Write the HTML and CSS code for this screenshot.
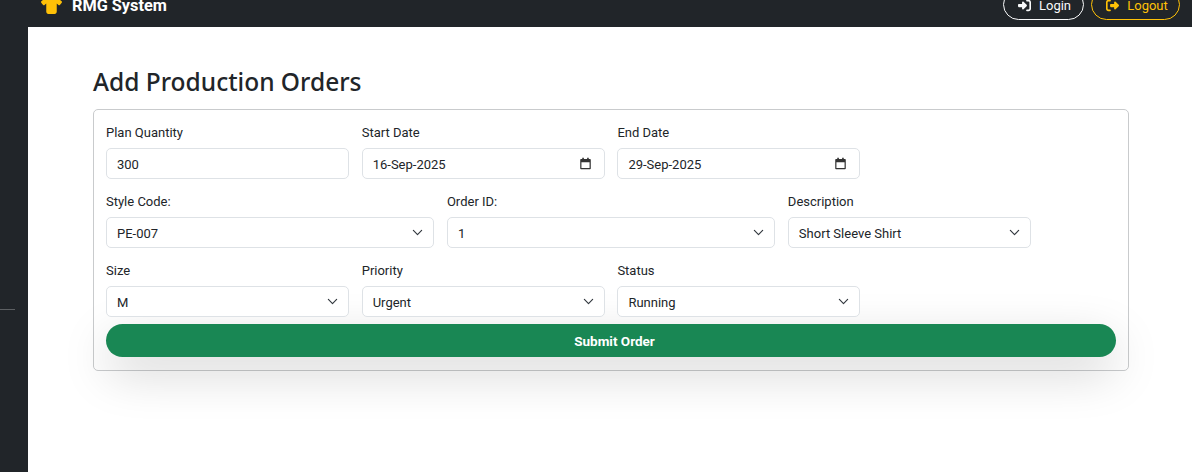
FILE: index.html
```html
<!DOCTYPE html>
<html>

<head>
    <title>Add Production Orders</title>
    <meta name="viewport" content="width=device-width, initial-scale=1">
    <link rel="stylesheet" href="styles.css">
</head>

<body>
    <header class="topbar">
        <a class="brand" href="#">
            <svg class="brand-icon" viewBox="0 0 640 512"><path d="M211.8 0c7.8 0 14.3 5.7 16.7 13.2C240.8 51.9 277.1 80 320 80s79.2-28.1 91.5-66.8C413.9 5.7 420.4 0 428.2 0l12.6 0c22.5 0 44.2 7.9 61.5 22.3L628.5 127.4c6.6 5.5 10.7 13.5 11.4 22.1s-2.1 17.1-7.8 23.6l-56 64c-11.4 13.1-31.2 14.6-44.6 3.5L480 197.7 480 448c0 35.3-28.7 64-64 64l-192 0c-35.3 0-64-28.7-64-64l0-250.3-51.5 42.9c-13.3 11.1-33.1 9.6-44.6-3.5l-56-64c-5.7-6.5-8.5-15-7.8-23.6s4.8-16.6 11.4-22.1L137.7 22.3C155 7.9 176.7 0 199.2 0l12.6 0z"/></svg>
            <span>RMG System</span>
        </a>
        <nav class="top-actions">
            <a class="pill pill-login" href="#">
                <svg class="pill-icon" viewBox="0 0 512 512"><path d="M217.9 105.9L340.7 228.7c7.2 7.2 11.3 17.1 11.3 27.3s-4.1 20.1-11.3 27.3L217.9 406.1c-6.4 6.4-15 9.9-24 9.9c-18.7 0-33.9-15.2-33.9-33.9l0-62.1L32 320c-17.7 0-32-14.3-32-32l0-64c0-17.7 14.3-32 32-32l128 0 0-62.1c0-18.7 15.2-33.9 33.9-33.9c9 0 17.6 3.6 24 9.9zM352 416l64 0c17.7 0 32-14.3 32-32l0-256c0-17.7-14.3-32-32-32l-64 0c-17.7 0-32-14.3-32-32s14.3-32 32-32l64 0c53 0 96 43 96 96l0 256c0 53-43 96-96 96l-64 0c-17.7 0-32-14.3-32-32s14.3-32 32-32z"/></svg>
                Login
            </a>
            <a class="pill pill-logout" href="#">
                <svg class="pill-icon" viewBox="0 0 512 512"><path d="M377.9 105.9L500.7 228.7c7.2 7.2 11.3 17.1 11.3 27.3s-4.1 20.1-11.3 27.3L377.9 406.1c-6.4 6.4-15 9.9-24 9.9c-18.7 0-33.9-15.2-33.9-33.9l0-62.1-128 0c-17.7 0-32-14.3-32-32l0-64c0-17.7 14.3-32 32-32l128 0 0-62.1c0-18.7 15.2-33.9 33.9-33.9c9 0 17.6 3.6 24 9.9zM160 96L96 96c-17.7 0-32 14.3-32 32l0 256c0 17.7 14.3 32 32 32l64 0c17.7 0 32 14.3 32 32s-14.3 32-32 32l-64 0c-53 0-96-43-96-96L0 128C0 75 43 32 96 32l64 0c17.7 0 32 14.3 32 32s-14.3 32-32 32z"/></svg>
                Logout
            </a>
        </nav>
    </header>

    <div class="layout">
        <aside class="sidebar">
            <hr class="sidebar-line">
        </aside>

        <main class="content">
            <h2 class="page-title">Add Production Orders</h2>
            <form class="order-form">
                <div class="form-row">
                    <div class="field span-3">
                        <label for="planQty">Plan Quantity</label>
                        <input class="control" type="text" id="planQty" value="300">
                    </div>
                    <div class="field span-3">
                        <label for="startDate">Start Date</label>
                        <input class="control control-date" type="text" id="startDate" value="16-Sep-2025">
                    </div>
                    <div class="field span-3">
                        <label for="endDate">End Date</label>
                        <input class="control control-date" type="text" id="endDate" value="29-Sep-2025">
                    </div>
                </div>

                <div class="form-row">
                    <div class="field span-4">
                        <label for="styleCode">Style Code:</label>
                        <select class="control control-select" id="styleCode">
                            <option>PE-007</option>
                        </select>
                    </div>
                    <div class="field span-4">
                        <label for="orderId">Order ID:</label>
                        <select class="control control-select" id="orderId">
                            <option>1</option>
                        </select>
                    </div>
                    <div class="field span-3">
                        <label for="description">Description</label>
                        <select class="control control-select" id="description">
                            <option>Short Sleeve Shirt</option>
                        </select>
                    </div>
                </div>

                <div class="form-row">
                    <div class="field span-3">
                        <label for="size">Size</label>
                        <select class="control control-select" id="size">
                            <option>M</option>
                        </select>
                    </div>
                    <div class="field span-3">
                        <label for="priority">Priority</label>
                        <select class="control control-select" id="priority">
                            <option>Urgent</option>
                        </select>
                    </div>
                    <div class="field span-3">
                        <label for="status">Status</label>
                        <select class="control control-select" id="status">
                            <option>Running</option>
                        </select>
                    </div>
                </div>

                <button class="submit-btn" type="submit">Submit Order</button>
            </form>
        </main>
    </div>
</body>

</html>
```

FILE: styles.css
```css
* {
    box-sizing: border-box;
}

html,
body {
    height: 472px;
    overflow: hidden;
}

body {
    margin: 0;
    background: #212529;
    color: #212529;
    font-family: Roboto, "Noto Sans", Arial, sans-serif;
    font-size: 13px;
}

.topbar {
    height: 27px;
    display: flex;
    justify-content: space-between;
    align-items: flex-end;
    padding: 0 12px 7px 41px;
    overflow: hidden;
}

.brand {
    display: flex;
    align-items: center;
    gap: 10px;
    color: #fff;
    font-size: 16.3px;
    font-weight: 700;
    text-decoration: none;
    line-height: 20px;
    margin-bottom: 4px;
}

.brand-icon {
    width: 21px;
    height: 17px;
    margin-top: -2px;
    fill: #ffc107;
}

.top-actions {
    display: flex;
    gap: 7px;
}

.pill {
    display: flex;
    align-items: center;
    justify-content: center;
    gap: 8px;
    height: 31px;
    padding: 1px 0 0 2px;
    border: 1px solid;
    border-radius: 50rem;
    font-size: 13px;
    text-decoration: none;
}

.pill-login {
    width: 81px;
    color: #f8f9fa;
    border-color: #f8f9fa;
}

.pill-logout {
    width: 89px;
    padding-left: 3px;
    color: #ffc107;
    border-color: #ffc107;
}

.pill-icon {
    width: 13px;
    height: 13px;
    fill: currentColor;
}

.layout {
    display: flex;
    height: 445px;
}

.sidebar {
    width: 28px;
    padding-top: 282px;
}

.sidebar-line {
    width: 15px;
    height: 1px;
    margin: 0;
    border: 0;
    background: #5d6063;
}

.content {
    flex: 1;
    background: #fff;
    padding: 39px 63px 0 65px;
}

.page-title {
    margin: 0 0 12px;
    font-family: "Noto Sans", Arial, sans-serif;
    font-size: 24.5px;
    font-weight: 500;
    line-height: 31px;
}

.order-form {
    border: 1px solid #c9cbcd;
    border-radius: 5px;
    padding: 12px 12px 13px;
}

.form-row {
    display: grid;
    grid-template-columns: repeat(12, 1fr);
    column-gap: 12.8px;
    margin-bottom: 12px;
}

.form-row:nth-last-child(2) {
    margin-bottom: 7px;
}

.span-3 {
    grid-column: span 3;
}

.span-4 {
    grid-column: span 4;
}

.field label {
    display: block;
    height: 19px;
    margin-bottom: 7px;
    padding-top: 2px;
    line-height: 18px;
}

.control {
    display: block;
    width: 100%;
    height: 31px;
    padding: 1px 10px 0;
    border: 1px solid #dee2e6;
    border-radius: 5px;
    background-color: #fff;
    background-repeat: no-repeat;
    color: #212529;
    font-family: inherit;
    font-size: 13px;
    appearance: none;
}

.control-select {
    padding-right: 32px;
    background-image: url("data:image/svg+xml,%3csvg xmlns='http://www.w3.org/2000/svg' viewBox='0 0 16 16'%3e%3cpath fill='none' stroke='%23343a40' stroke-linecap='round' stroke-linejoin='round' stroke-width='1.7' d='m2 5 6 6 6-6'/%3e%3c/svg%3e");
    background-position: right 10px center;
    background-size: 11px 11px;
}

.control-date {
    background-image: url("data:image/svg+xml,%3csvg xmlns='http://www.w3.org/2000/svg' viewBox='0 0 16 16'%3e%3cpath fill='%23333' d='M4 1h2v1.500h4V1h2v1.500h1.500a1 1 0 0 1 1 1V14a1 1 0 0 1-1 1h-11a1 1 0 0 1-1-1V3.500a1 1 0 0 1 1-1H4zM3 6.500V13.500h10V6.500z'/%3e%3c/svg%3e");
    background-position: right 12px center;
    background-size: 13px 13px;
}

.submit-btn {
    display: block;
    width: 100%;
    height: 33px;
    padding: 1px 0 0 7px;
    border: 0;
    border-radius: 50rem;
    background: #198754;
    color: #fff;
    font-family: inherit;
    font-size: 13.5px;
    font-weight: 700;
    box-shadow: 0 16px 48px rgba(0, 0, 0, 0.175);
    cursor: pointer;
}
```
